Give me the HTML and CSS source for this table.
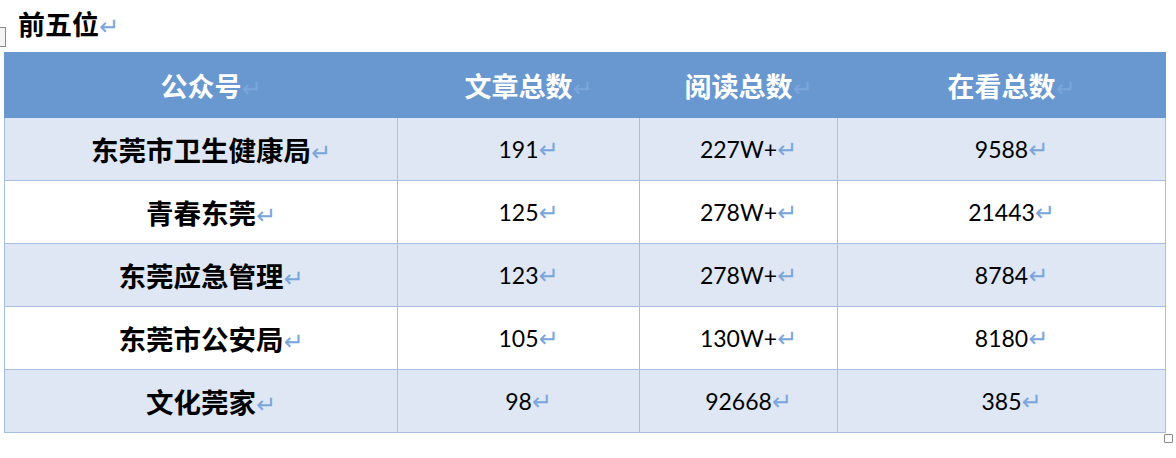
FILE: index.html
```html
<!DOCTYPE html>
<html lang="zh">
<head>
<meta charset="utf-8">
<link rel="stylesheet" href="styles.css">
</head>
<body>
<div class="page">
  <div class="handle-left"></div>
  <h1 class="title">前五位<span class="ret">↵</span></h1>
  <table class="rank">
    <colgroup>
      <col class="c1"><col class="c2"><col class="c3"><col class="c4">
    </colgroup>
    <thead>
      <tr>
        <th>公众号<span class="ret">↵</span></th>
        <th>文章总数<span class="ret">↵</span></th>
        <th>阅读总数<span class="ret">↵</span></th>
        <th>在看总数<span class="ret">↵</span></th>
      </tr>
    </thead>
    <tbody>
      <tr class="alt">
        <td class="name">东莞市卫生健康局<span class="ret">↵</span></td>
        <td>191<span class="ret">↵</span></td>
        <td>227W+<span class="ret">↵</span></td>
        <td>9588<span class="ret">↵</span></td>
      </tr>
      <tr>
        <td class="name">青春东莞<span class="ret">↵</span></td>
        <td>125<span class="ret">↵</span></td>
        <td>278W+<span class="ret">↵</span></td>
        <td>21443<span class="ret">↵</span></td>
      </tr>
      <tr class="alt">
        <td class="name">东莞应急管理<span class="ret">↵</span></td>
        <td>123<span class="ret">↵</span></td>
        <td>278W+<span class="ret">↵</span></td>
        <td>8784<span class="ret">↵</span></td>
      </tr>
      <tr>
        <td class="name">东莞市公安局<span class="ret">↵</span></td>
        <td>105<span class="ret">↵</span></td>
        <td>130W+<span class="ret">↵</span></td>
        <td>8180<span class="ret">↵</span></td>
      </tr>
      <tr class="alt">
        <td class="name">文化莞家<span class="ret">↵</span></td>
        <td>98<span class="ret">↵</span></td>
        <td>92668<span class="ret">↵</span></td>
        <td>385<span class="ret">↵</span></td>
      </tr>
    </tbody>
  </table>
  <div class="handle-right"></div>
</div>
</body>
</html>
```
FILE: styles.css
```css
html, body {
  margin: 0;
  padding: 0;
  background: #ffffff;
}
.page {
  position: relative;
  width: 1176px;
  height: 458px;
  padding-left: 4px;
  box-sizing: border-box;
  font-family: "Noto Sans CJK SC", sans-serif;
}
.title {
  margin: 0;
  height: 52px;
  padding-left: 14px;
  font-size: 27px;
  font-weight: 700;
  line-height: 48px;
  color: #000;
}
.ret {
  display: inline-block;
  width: 0;
  overflow: visible;
  white-space: nowrap;
  color: #7aa6dc;
  font-family: "DejaVu Sans", sans-serif;
  font-size: 24px;
  font-weight: 400;
  line-height: 1;
  vertical-align: 0;
}
.rank {
  border-collapse: collapse;
  table-layout: fixed;
  width: 1161px;
}
.c1 { width: 393px; }
.c2 { width: 242px; }
.c3 { width: 198px; }
.c4 { width: 328px; }
.rank th {
  height: 64px;
  padding: 0;
  background: #6898cf;
  color: #ffffff;
  font-size: 27px;
  font-weight: 700;
  text-align: center;
  border: 1px solid #6898cf;
}
.rank td {
  height: 62px;
  padding: 0;
  border: 1px solid #a6bee0;
  text-align: center;
  font-family: "Lato", "Noto Sans CJK SC", sans-serif;
  font-size: 23px;
  color: #000;
}
.rank td.name {
  font-family: "Noto Sans CJK SC", sans-serif;
  font-size: 27.5px;
  font-weight: 700;
}
.rank tr.alt td {
  background: #dee7f3;
}
.handle-left {
  position: absolute;
  left: -4px;
  top: 27px;
  width: 8px;
  height: 18px;
  border: 1px solid #8a8a8a;
  background: #f4f4f4;
}
.handle-right {
  position: absolute;
  left: 1164px;
  top: 434px;
  width: 7px;
  height: 7px;
  border: 1px solid #8a8a8a;
  border-radius: 1px;
  background: #fff;
}
```
